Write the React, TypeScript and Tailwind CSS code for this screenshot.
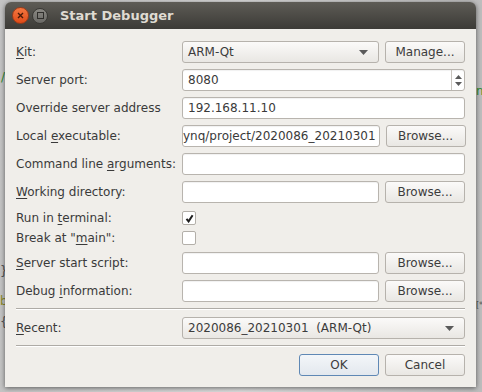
import React from 'react'

const field =
  'h-full rounded-[3px] border border-[#b8b4ae] bg-white shadow-[inset_0_1px_1px_rgba(0,0,0,0.06)]'
const btn =
  'flex h-full w-[80px] shrink-0 items-center justify-center rounded-[3px] border border-[#b6b2ac] bg-gradient-to-b from-[#fbfaf9] to-[#e9e7e3] text-[#3c3c3c]'

const Arrow = () => (
  <svg width="9" height="5" viewBox="0 0 9 5" className="shrink-0">
    <path d="M0 0 L9 0 L4.5 5 Z" fill="#5a5a5a" />
  </svg>
)

const Label = ({ children }: { children: React.ReactNode }) => (
  <div className="w-[166px] shrink-0 whitespace-nowrap">{children}</div>
)

const U = ({ children }: { children: React.ReactNode }) => (
  <span className="underline decoration-1 underline-offset-[2px]">{children}</span>
)

const Row = ({
  className,
  children,
}: {
  className: string
  children: React.ReactNode
}) => <div className={`flex items-center ${className}`}>{children}</div>

const InputBrowse = ({ value }: { value?: string }) => (
  <div className="flex h-full flex-1 gap-[6px]">
    <div className={`${field} flex flex-1 items-center justify-end overflow-hidden whitespace-nowrap pr-[3px]`}>
      {value}
    </div>
    <div className={btn}>Browse...</div>
  </div>
)

const Checkbox = ({ checked }: { checked?: boolean }) => (
  <div className="flex h-[14px] w-[14px] items-center justify-center rounded-[2px] border border-[#b3afa9] bg-white">
    {checked && (
      <svg width="9" height="9" viewBox="0 0 9 9">
        <path d="M1.5 4.8 L3.6 7.4 L7.6 1.2" stroke="#1e1e1e" strokeWidth="2" fill="none" />
      </svg>
    )}
  </div>
)

export default function App() {
  return (
    <div className="relative h-[392px] w-[482px] overflow-hidden bg-gradient-to-r from-[#c4c4c4] via-[#dcdcdc] to-[#bdbdbd] pl-[5px] pt-[2px] font-['DejaVu_Sans',sans-serif] text-[12px] text-[#3a3a3a]">
      {/* bits of the editor behind the dialog */}
      <span className="absolute left-[1px] top-[68px] text-[#2e8b2e]">/</span>
      <span className="absolute left-0 top-[262px] text-[#555]">{'}'}</span>
      <span className="absolute left-0 top-[292px] text-[#8a8a2a]">b</span>
      <span className="absolute left-0 top-[313px] text-[#555]">{'{'}</span>
      <span className="absolute left-[476px] top-[82px] text-[#2e8b2e]">n</span>
      <span className="absolute left-[476px] top-[300px] text-[8px] text-[#555]">[*</span>

      <div className="relative flex h-[385px] w-[471px] flex-col rounded-t-[6px] shadow-[0_1px_5px_rgba(0,0,0,0.55)]">
        <div className="flex h-[27px] shrink-0 items-center rounded-t-[6px] bg-gradient-to-b from-[#5e5c56] to-[#3c3b37] pl-[7px]">
          <div className="flex h-[17px] w-[17px] items-center justify-center rounded-full border border-[#9c3a18] bg-gradient-to-b from-[#f4773f] to-[#df4a16]">
            <svg width="7" height="7" viewBox="0 0 7 7">
              <path d="M1 1 L6 6 M6 1 L1 6" stroke="#4a1a08" strokeWidth="1.4" />
            </svg>
          </div>
          <div className="ml-[3px] flex h-[16px] w-[16px] items-center justify-center rounded-full border border-[#3a3935] bg-gradient-to-b from-[#8a8883] to-[#6a6965]">
            <div className="h-[7px] w-[7px] border border-[#2f2e2b]" />
          </div>
          <div className="ml-[12px] text-[13px] font-bold text-[#dfdbd2]">Start Debugger</div>
        </div>

        <div className="flex flex-1 flex-col bg-[#f0eeea] px-[11px] pt-[12px]">
          <Row className="h-[22px]">
            <Label>
              <U>K</U>it:
            </Label>
            <div className="flex h-full flex-1 gap-[6px]">
              <div className={`${btn} !w-auto flex-1 !justify-between pl-[5px] pr-[10px]`}>
                <span>ARM-Qt</span>
                <Arrow />
              </div>
              <div className={btn}>Manage...</div>
            </div>
          </Row>
          <Row className="mt-[6px] h-[22px]">
            <Label>Server port:</Label>
            <div className={`${field} flex flex-1 items-center`}>
              <span className="flex-1 pl-[5px]">8080</span>
              <div className="flex h-full w-[13px] flex-col items-center justify-center gap-[3px] border-l border-[#c8c4be]">
                <svg width="7" height="4" viewBox="0 0 7 4">
                  <path d="M0 4 L7 4 L3.5 0 Z" fill="#5a5a5a" />
                </svg>
                <svg width="7" height="4" viewBox="0 0 7 4">
                  <path d="M0 0 L7 0 L3.5 4 Z" fill="#5a5a5a" />
                </svg>
              </div>
            </div>
          </Row>
          <Row className="mt-[6px] h-[22px]">
            <Label>Override server address</Label>
            <div className={`${field} flex flex-1 items-center pl-[5px]`}>192.168.11.10</div>
          </Row>
          <Row className="mt-[6px] h-[22px]">
            <Label>
              Local <U>e</U>xecutable:
            </Label>
            <InputBrowse value="ynq/project/2020086_20210301" />
          </Row>
          <Row className="mt-[6px] h-[22px]">
            <Label>
              Command line <U>a</U>rguments:
            </Label>
            <div className={`${field} flex-1`} />
          </Row>
          <Row className="mt-[6px] h-[22px]">
            <Label>
              <U>W</U>orking directory:
            </Label>
            <InputBrowse />
          </Row>
          <Row className="mt-[8px] h-[14px]">
            <Label>
              Run in <U>t</U>erminal:
            </Label>
            <Checkbox checked />
          </Row>
          <Row className="mt-[6px] h-[14px]">
            <Label>
              Break at "<U>m</U>ain":
            </Label>
            <Checkbox />
          </Row>
          <Row className="mt-[7px] h-[22px]">
            <Label>
              <U>S</U>erver start script:
            </Label>
            <InputBrowse />
          </Row>
          <Row className="mt-[6px] h-[22px]">
            <Label>
              Debug <U>i</U>nformation:
            </Label>
            <InputBrowse />
          </Row>
          <div className="mt-[6px] h-[2px] border-t border-b border-t-[#aeaba6] border-b-white" />
          <Row className="mt-[7px] h-[22px]">
            <Label>
              <U>R</U>ecent:
            </Label>
            <div className={`${btn} !w-auto flex-1 !justify-between pl-[5px] pr-[10px]`}>
              <span className="whitespace-pre">2020086_20210301  (ARM-Qt)</span>
              <Arrow />
            </div>
          </Row>
          <div className="mt-[6px] h-[2px] border-t border-b border-t-[#aeaba6] border-b-white" />
          <div className="mt-[7px] flex h-[22px] justify-end gap-[6px]">
            <div className={`${btn} !border-[#5f88b5] !from-[#f3f6f9] !to-[#e3e8ee]`}>OK</div>
            <div className={btn}>Cancel</div>
          </div>
        </div>
      </div>
    </div>
  )
}
